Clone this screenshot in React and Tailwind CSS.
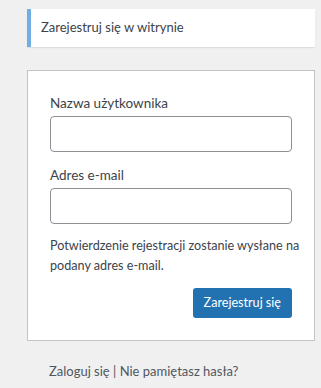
export default function App() {
  return (
    <div
      className="min-h-[388px] w-full bg-[#f0f0f1] pt-[9px] text-[#3c434a]"
      style={{ fontFamily: 'Lato, "Open Sans", sans-serif' }}
    >
      <div className="ml-[27px] w-[288px]">
        <div className="flex h-[38px] items-center border-l-4 border-[#72aee6] bg-white pl-[10px] text-[13px] shadow-[0_1px_1px_rgba(0,0,0,0.08)]">
          Zarejestruj się w witrynie
        </div>

        <form className="mt-[23px] border border-[#c3c4c7] bg-white px-[22px] pt-[22px] pb-[22px]">
          <label className="block text-[13.5px] leading-[21px]">Nazwa użytkownika</label>
          <div className="mt-[2px] h-[36px] rounded-[4px] border border-[#8c8f94] bg-white" />

          <label className="mt-[13px] block text-[13.5px] leading-[21px]">Adres e-mail</label>
          <div className="mt-[2px] h-[36px] rounded-[4px] border border-[#8c8f94] bg-white" />

          <p className="-mr-[12px] mt-[12px] text-[12.6px] leading-[19.5px]">
            Potwierdzenie rejestracji zostanie wysłane na podany adres e-mail.
          </p>

          <div className="mt-[13px] flex justify-end">
            <button
              type="button"
              className="h-[30px] rounded-[3px] bg-[#2271b1] px-[11px] text-[12.6px] text-white"
            >
              Zarejestruj się
            </button>
          </div>
        </form>

        <p className="mt-[21px] pl-[22px] text-[13px] leading-[19.5px] text-[#50575e]">
          Zaloguj się | Nie pamiętasz hasła?
        </p>
      </div>
    </div>
  )
}
